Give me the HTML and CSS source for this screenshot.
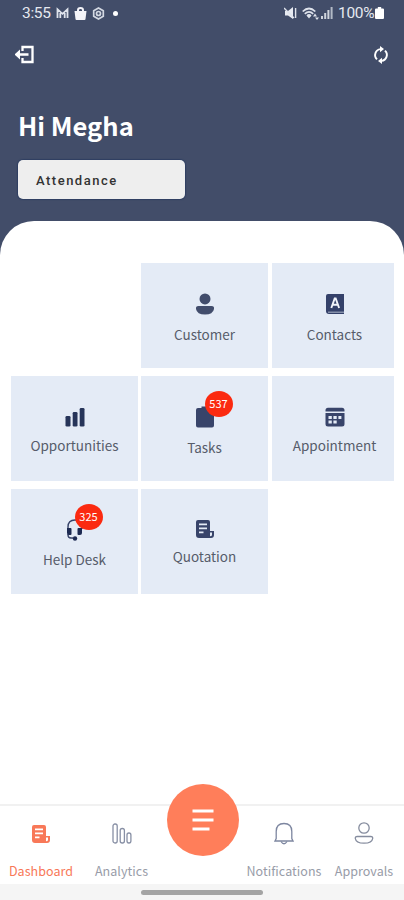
FILE: index.html
```html
<!DOCTYPE html>
<html lang="en">
<head>
<meta charset="utf-8">
<title>Dashboard</title>
<link rel="stylesheet" href="styles.css">
</head>
<body>
<svg class="defs" width="0" height="0">
  <symbol id="note" viewBox="0 0 20 20">
    <path fill-rule="evenodd" fill="currentColor" d="M3 1h10q2 0 2 2v9h4v4q0 3-3 3H4q-3 0-3-3V3q0-2 2-2zM4 4.600v1.700h8V4.600zm0 4v1.700h8V8.600zm0 4v1.700h4.500v-1.700zm11 1v3.700q2 0 2-1.600v-2.100z"/>
  </symbol>
</svg>
<div class="screen">
  <header class="header">
    <div class="status">
      <span class="time">3:55</span>
      <svg class="st-mail" width="13" height="12" viewBox="0 0 13 12"><path d="M1.500 11V2.200l5 4.600 5-4.600V11M4.300 11V6M8.700 11V6" fill="none" stroke="#dfe3ec" stroke-width="1.800"/></svg>
      <svg class="st-bag" width="13" height="13" viewBox="0 0 13 13"><path d="M.5 4h12l-1 8q0 1-1 1h-8q-1 0-1-1z" fill="#f4f4f8"/><path d="M4 5V3q0-2 2.500-2T9 3v2" fill="none" stroke="#f4f4f8" stroke-width="2"/></svg>
      <svg class="st-gear" width="13" height="13" viewBox="0 0 13 13"><path d="M6.500 1l4.800 2.800v5.400L6.500 12 1.700 9.200V3.800z" fill="none" stroke="#d3d8e2" stroke-width="1.700"/><circle cx="6.500" cy="6.500" r="2" fill="none" stroke="#d3d8e2" stroke-width="1.700"/></svg>
      <span class="dot"></span>
      <span class="grow"></span>
      <svg class="st-mute" width="13" height="12" viewBox="0 0 13 12"><path d="M1 4h3l5-4v12L4 8.500H1z" fill="#e8ebf2"/><path d="M0 1l10 10M11.600 1v10" stroke="#dfe3ec" stroke-width="1.400"/></svg>
      <svg class="st-wifi" width="17" height="13" viewBox="0 0 17 13"><g fill="none" stroke="#dfe3ec" stroke-width="1.700"><path d="M.7 4.500q6.300-6 12.600 0M2.800 6.800q4.200-4 8.400 0M5 9q2-2 4 0"/></g><path d="M5 9h4l-2 2.400zM13 6.500l2 3h-4zM15 13l-2-2.500h4z" fill="#dfe3ec"/></svg>
      <svg class="st-sig" width="12" height="12" viewBox="0 0 12 12"><path d="M0 9h2v3H0zM3.200 6h2v6h-2zM6.400 3h2v9h-2z" fill="#cfd4dd"/><path d="M9.600 0h2v12h-2z" fill="#b3bac6"/></svg>
      <span class="pct">100%</span>
      <svg class="st-bat" width="9" height="12" viewBox="0 0 8 12" preserveAspectRatio="none"><path d="M2.500 0h3v1.500H7q1 0 1 1V11q0 1-1 1H1q-1 0-1-1V2.500q0-1 1-1h1.500z" fill="#fff"/></svg>
    </div>
    <div class="toolbar">
      <svg width="20" height="20" viewBox="0 0 20 20"><path d="M7.500 6V2h10v15h-10v-4M2.500 9.500h11" fill="none" stroke="#fff" stroke-width="2.300"/><path d="M-.5 9.500l5.500-5v10z" fill="#fff"/></svg>
      <svg width="16" height="18" viewBox="0 0 16 18"><path d="M4 13.400A6 6 0 0 1 7.500 3.100M12 4.600A6 6 0 0 1 8.500 14.900" fill="none" stroke="#fff" stroke-width="1.900"/><path d="M7 0l4 3.100-4 3.100zM9 11.800v6.200l-4-3.100z" fill="#fff"/></svg>
    </div>
    <h1 class="hello">Hi Megha</h1>
    <button class="attend">Attendance</button>
  </header>
  <main class="sheet">
    <div class="grid">
      <div class="tile c2 r1">
        <svg class="icon" width="20" height="22" viewBox="0 0 20 22"><circle cx="10" cy="5.900" r="5.500" fill="#424d6c"/><path d="M3.500 13h13q3 0 2.500 3-1 5.500-9 5.500T1 16q-.5-3 2.500-3z" fill="#424d6c"/></svg>
        <span class="label">Customer</span>
      </div>
      <div class="tile r1 c3">
        <svg class="icon" width="20" height="22" viewBox="0 0 20 22"><path d="M3 1h16v20H4q-3 0-3-3V3q0-2 2-2z" fill="#34416a"/><path d="M3 18.600h16v1.200H3z" fill="#9aa4bb"/><path d="M6.300 15l3.400-9.500h1L14.100 15M7.600 11.800h5.200" fill="none" stroke="#f2f5fb" stroke-width="1.900"/></svg>
        <span class="label">Contacts</span>
      </div>
      <div class="tile r2">
        <svg class="icon" width="20" height="20" viewBox="0 0 20 20"><g fill="#263459"><rect x=".5" y="9" width="5" height="10.500" rx="1.300"/><rect x="7.700" y="5" width="4.800" height="14.500" rx="1.300"/><rect x="14.700" y="1" width="4.800" height="18.500" rx="1.300"/></g></svg>
        <span class="label">Opportunities</span>
      </div>
      <div class="tile r2 low">
        <div class="icon wrap"><svg width="20" height="22" viewBox="0 0 20 22"><path d="M3 2h3.500V.5h6V2h4.500q2 0 2 2v15.500q0 2-2 2H3q-2 0-2-2V4q0-2 2-2z" fill="#38446a"/></svg><span class="badge">537</span></div>
        <span class="label">Tasks</span>
      </div>
      <div class="tile r2 c3">
        <svg class="icon" width="20" height="20" viewBox="0 0 20 20"><path fill-rule="evenodd" fill="#38446a" d="M3 .8h14q2.500 0 2.500 2.500V4.500H.5V3.300Q.5.800 3 .8zM.5 6h19v11q0 2.500-2.500 2.500H3Q.5 19.500.5 17zM3.500 9v3h3.300V9zm4.900 0v3h3.300V9zm5 0v3h3V9zM3.500 13.500v3h3.300v-3zm4.900 0v3h3.300v-3z"/></svg>
        <span class="label">Appointment</span>
      </div>
      <div class="tile r3 low">
        <div class="icon wrap"><svg width="20" height="22" viewBox="0 0 20 22"><path d="M3 10V8q0-7 7-7t7 7v2M3 15v1q0 3 3 3h2" fill="none" stroke="#38446a" stroke-width="1.400"/><path d="M2 9h3.500q1 0 1 1v5q0 1-1 1H4q-2 0-2-2zM13.500 9H17v5q0 2-2 2h-1.500q-1 0-1-1v-5q0-1 1-1z" fill="#1d2a52"/><circle cx="10" cy="19.500" r="2.200" fill="#1d2a52"/></svg><span class="badge">325</span></div>
        <span class="label">Help Desk</span>
      </div>
      <div class="tile r3">
        <svg class="icon ink" width="20" height="20"><use href="#note"/></svg>
        <span class="label">Quotation</span>
      </div>
    </div>
  </main>
  <nav class="nav">
    <div class="item active"><svg class="nicon" width="20" height="24" viewBox="0 -2 20 24"><use href="#note" width="20" height="20"/></svg><span>Dashboard</span></div>
    <div class="item"><svg class="nicon" width="20" height="24" viewBox="0 0 20 24"><g fill="none" stroke="#8890a5" stroke-width="1.300"><rect x="1" y="2" width="4.200" height="19" rx="2"/><rect x="8.200" y="6.500" width="4.200" height="14.500" rx="2"/><rect x="15" y="11" width="3.900" height="10" rx="1.900"/></g></svg><span>Analytics</span></div>
    <div class="fab"><svg width="24" height="24" viewBox="0 0 24 24"><path d="M1.500 3h21M1.500 12h21M1.500 21h17" stroke="#fff" stroke-width="2.800"/></svg></div>
    <div class="item"><svg class="nicon" width="20" height="24" viewBox="0 0 20 24"><g fill="none" stroke="#7d86a0" stroke-width="1.300"><path d="M1 19l1.200-2.500V9.500Q2.200 1.500 10 1.500t7.800 8V16.500L19 19z"/><path d="M7 19.500q3 4.500 6 0"/></g></svg><span>Notifications</span></div>
    <div class="item"><svg class="nicon" width="20" height="24" viewBox="0 0 20 24"><g fill="none" stroke="#858c9e" stroke-width="1.300"><circle cx="10" cy="6" r="5.200"/><path d="M3.300 14.500h13.400q2.300 0 2 2-.7 4.700-8.700 4.700t-8.700-4.700q-.3-2 2-2z"/></g></svg><span>Approvals</span></div>
  </nav>
  <div class="gesture"><span></span></div>
</div>
</body>
</html>
```

FILE: styles.css
```css
* { box-sizing: border-box; }
body { margin: 0; font-family: "Noto Sans CJK SC", "Noto Sans", sans-serif; background: #424d69; }
.defs { display: block; }
.screen { width: 404px; height: 900px; display: flex; flex-direction: column; background: #424d69; overflow: hidden; }
.header { height: 221px; flex: none; color: #fff; }
.status { display: flex; align-items: center; height: 26px; padding: 0 20px 0 22px; font: 15.5px Roboto, sans-serif; color: #e6e9f0; }
.time { width: 29px; margin-right: 5px; letter-spacing: -0.3px; }
.st-bag { margin-left: 5px; }
.st-gear { margin-left: 5px; }
.dot { width: 5px; height: 5px; border-radius: 50%; background: #fff; margin-left: 8px; }
.grow { flex: 1; }
.st-wifi { margin-left: 5px; }
.st-sig { margin-left: 2px; }
.pct { margin-left: 5px; width: 36px; letter-spacing: -0.3px; white-space: nowrap; }
.st-bat { margin-left: 1px; }
.toolbar { display: flex; justify-content: space-between; align-items: center; height: 58px; padding: 0 15px 0 15px; }
.hello { margin: 21px 0 0 18px; font-size: 25.5px; line-height: 40px; font-weight: 700; }
.attend { display: block; width: 167px; height: 39px; margin: 15px 0 0 18px; padding: 1px 18px 0; border: 0; border-radius: 5px; background: #eeeeee; box-shadow: 0 0 1px 1px #2f3f62; text-align: left; font: 500 13px Roboto, sans-serif; letter-spacing: 1.5px; color: #333; }
.sheet { flex: 1; background: #fff; border-radius: 34px 34px 0 0; padding: 42px 10px 0 11px; }
.grid { display: grid; grid-template-columns: 127px 127px 122px; grid-auto-rows: 105px; column-gap: 3.5px; row-gap: 8px; margin-right: -2px; }
.tile { background: #e4ebf6; display: flex; flex-direction: column; align-items: center; padding-top: 31px; }
.grid > :nth-child(1), .grid > :nth-child(4), .grid > :nth-child(7) { margin-left: -0.5px; margin-right: 0.5px; }
.c2 { grid-column: 2; }
.c3 { padding-left: 3px; }
.r1 { padding-top: 30px; }
.icon { flex: none; }
.ink { color: #38446a; }
.label { font-size: 13.5px; line-height: 20px; margin-top: 9px; color: #565c6a; white-space: nowrap; }
.r2 .label { margin-top: 8px; }
.r3 .label { margin-top: 7px; }
.r3 { padding-top: 30px; }
.low { padding-top: 30px; }
.r2.low .label { margin-top: 9px; }
.r3.low .label { margin-top: 8px; }
.wrap { position: relative; height: 22px; }
.badge { position: absolute; left: 10px; top: -15px; width: 28px; height: 26px; border-radius: 50%; background: #fb2a10; color: #fff; font-size: 11px; line-height: 25px; text-align: center; }
.nav { height: 80px; flex: none; display: grid; grid-template-columns: 82px 79px 83px 80px 80px; background: #fff; border-top: 2px solid #f1f1f1; }
.item { display: flex; flex-direction: column; align-items: center; padding-top: 16px; font-size: 12.5px; line-height: 18px; letter-spacing: 0.05px; color: #989ca8; white-space: nowrap; }
.item span { margin-top: 16px; }
.active { color: #f87858; }
.fab { width: 72px; height: 72px; margin: -22px 0 0 5.5px; border-radius: 50%; background: #ff7e5a; display: flex; align-items: center; justify-content: center; }
.gesture { height: 16px; flex: none; background: #f5f5f5; display: flex; justify-content: center; padding-top: 6px; }
.gesture span { width: 122px; height: 5px; border-radius: 3px; background: #a4a4a4; }
```
